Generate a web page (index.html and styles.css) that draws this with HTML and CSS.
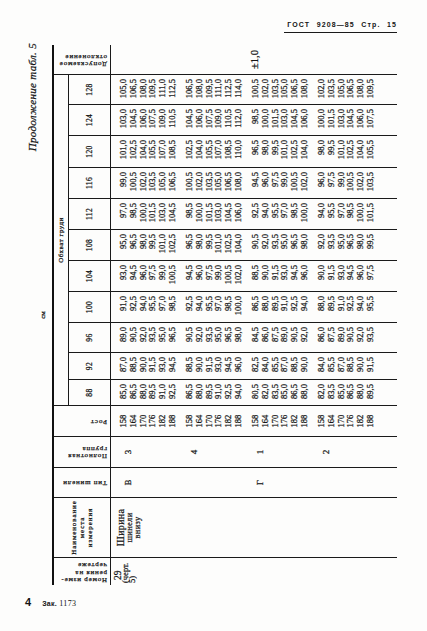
FILE: index.html
```html
<!DOCTYPE html>
<html lang="ru">
<head>
<meta charset="utf-8">
<title>ГОСТ 9208—85 Стр. 15</title>
<link rel="stylesheet" href="styles.css">
</head>
<body>
<header class="top"><span class="title">ГОСТ 9208—85 Стр. 15</span></header>
<main class="sheet">
  <div class="rot">
    <div class="caption">
      <span class="unit">см</span>
      <span class="cont">Продолжение табл. 5</span>
    </div>
    <div class="tbl">
      <div class="c1 hb vt c-num"><span>Номер изме-<br>рения на<br>чертеже</span></div>
      <div class="hb c-name"><span>Наименование<br>места<br>измерения</span></div>
      <div class="hb vt c-type"><span>Тип шинели</span></div>
      <div class="hb vt c-full"><span>Полнотная<br>группа</span></div>
      <div class="hb vt c-rost"><span>Рост</span></div>
      <div class="hb c-chest">Обхват груди</div>
      <div class="hb vt c-tol"><span>Допускаемое<br>отклонение</span></div>

      <div class="c1 d-num"><span class="ind">29</span><br>(черт.<br>5)</div>
      <div class="d-name"><span class="cap">Ширина</span><span>шинели</span><span>внизу</span></div>
      <div class="d-type d-b">В</div>
      <div class="d-type d-g">Г</div>
      <div class="d-tol">±1,0</div>

      <div class="hb lab">88</div>
      <div class="hb lab">92</div>
      <div class="hb lab">96</div>
      <div class="hb lab">100</div>
      <div class="hb lab">104</div>
      <div class="hb lab">108</div>
      <div class="hb lab">112</div>
      <div class="hb lab">116</div>
      <div class="hb lab">120</div>
      <div class="hb lab">124</div>
      <div class="hb lab">128</div>

      <div class="grp">3</div>
      <div class="n rost">158<br>164<br>170<br>176<br>182<br>188</div>
      <div class="n">85,0<br>86,5<br>88,0<br>89,5<br>91,0<br>92,5</div>
      <div class="n">87,0<br>88,5<br>90,0<br>91,5<br>93,0<br>94,5</div>
      <div class="n">89,0<br>90,5<br>92,0<br>93,5<br>95,0<br>96,5</div>
      <div class="n">91,0<br>92,5<br>94,0<br>95,5<br>97,0<br>98,5</div>
      <div class="n">93,0<br>94,5<br>96,0<br>97,5<br>99,0<br>100,5</div>
      <div class="n">95,0<br>96,5<br>98,0<br>99,5<br>101,0<br>102,5</div>
      <div class="n">97,0<br>98,5<br>100,0<br>101,5<br>103,0<br>104,5</div>
      <div class="n">99,0<br>100,5<br>102,0<br>103,5<br>105,0<br>106,5</div>
      <div class="n">101,0<br>102,5<br>104,0<br>105,5<br>107,0<br>108,5</div>
      <div class="n">103,0<br>104,5<br>106,0<br>107,5<br>109,0<br>110,5</div>
      <div class="n">105,0<br>106,5<br>108,0<br>109,5<br>111,0<br>112,5</div>

      <div class="grp">4</div>
      <div class="n rost">158<br>164<br>170<br>176<br>182<br>188</div>
      <div class="n">86,5<br>88,0<br>89,5<br>91,0<br>92,5<br>94,0</div>
      <div class="n">88,5<br>90,0<br>91,5<br>93,0<br>94,5<br>96,0</div>
      <div class="n">90,5<br>92,0<br>93,5<br>95,0<br>96,5<br>98,0</div>
      <div class="n">92,5<br>94,0<br>95,5<br>97,0<br>98,5<br>100,0</div>
      <div class="n">94,5<br>96,0<br>97,5<br>99,0<br>100,5<br>102,0</div>
      <div class="n">96,5<br>98,0<br>99,5<br>101,0<br>102,5<br>104,0</div>
      <div class="n">98,5<br>100,0<br>101,5<br>103,0<br>104,5<br>106,0</div>
      <div class="n">100,5<br>102,0<br>103,5<br>105,0<br>106,5<br>108,0</div>
      <div class="n">102,5<br>104,0<br>105,5<br>107,0<br>108,5<br>110,0</div>
      <div class="n">104,5<br>106,0<br>107,5<br>109,0<br>110,5<br>112,0</div>
      <div class="n">106,5<br>108,0<br>109,5<br>111,0<br>112,5<br>114,0</div>

      <div class="grp">1</div>
      <div class="n rost">158<br>164<br>170<br>176<br>182<br>188</div>
      <div class="n">80,5<br>82,0<br>83,5<br>85,0<br>86,5<br>88,0</div>
      <div class="n">82,5<br>84,0<br>85,5<br>87,0<br>88,5<br>90,0</div>
      <div class="n">84,5<br>86,0<br>87,5<br>89,0<br>90,5<br>92,0</div>
      <div class="n">86,5<br>88,0<br>89,5<br>91,0<br>92,5<br>94,0</div>
      <div class="n">88,5<br>90,0<br>91,5<br>93,0<br>94,5<br>96,0</div>
      <div class="n">90,5<br>92,0<br>93,5<br>95,0<br>96,5<br>98,0</div>
      <div class="n">92,5<br>94,0<br>95,5<br>97,0<br>98,5<br>100,0</div>
      <div class="n">94,5<br>96,0<br>97,5<br>99,0<br>100,5<br>102,0</div>
      <div class="n">96,5<br>98,0<br>99,5<br>101,0<br>102,5<br>104,0</div>
      <div class="n">98,5<br>100,0<br>101,5<br>103,0<br>104,5<br>106,0</div>
      <div class="n">100,5<br>102,0<br>103,5<br>105,0<br>106,5<br>108,0</div>

      <div class="grp">2</div>
      <div class="n rost">158<br>164<br>170<br>176<br>182<br>188</div>
      <div class="n">82,0<br>83,5<br>85,0<br>86,5<br>88,0<br>89,5</div>
      <div class="n">84,0<br>85,5<br>87,0<br>88,5<br>90,0<br>91,5</div>
      <div class="n">86,0<br>87,5<br>89,0<br>90,5<br>92,0<br>93,5</div>
      <div class="n">88,0<br>89,5<br>91,0<br>92,5<br>94,0<br>95,5</div>
      <div class="n">90,0<br>91,5<br>93,0<br>94,5<br>96,0<br>97,5</div>
      <div class="n">92,0<br>93,5<br>95,0<br>96,5<br>98,0<br>99,5</div>
      <div class="n">94,0<br>95,5<br>97,0<br>98,5<br>100,0<br>101,5</div>
      <div class="n">96,0<br>97,5<br>99,0<br>100,5<br>102,0<br>103,5</div>
      <div class="n">98,0<br>99,5<br>101,0<br>102,5<br>104,0<br>105,5</div>
      <div class="n">100,0<br>101,5<br>103,0<br>104,5<br>106,0<br>107,5</div>
      <div class="n">102,0<br>103,5<br>105,0<br>106,5<br>108,0<br>109,5</div>
    </div>
  </div>
</main>
<footer class="foot"><b class="pg">4</b><span class="zak"><b>Зак.</b> 1173</span></footer>
</body>
</html>
```

FILE: styles.css
```css
html, body {
  margin: 0;
  padding: 0;
  background: #fdfdfc;
  overflow: hidden;
}
body {
  width: 427px;
  height: 631px;
  font-family: "Liberation Serif", "DejaVu Serif", serif;
  color: #141414;
}

/* running head */
.top {
  height: 45px;
  box-sizing: border-box;
  padding: 21px 30px 0 0;
  display: flex;
  justify-content: flex-end;
  align-items: flex-start;
}
.title {
  font-family: "Liberation Sans", Arial, sans-serif;
  font-weight: 700;
  font-size: 7px;
  line-height: 8px;
  letter-spacing: 1.1px;
  word-spacing: 3.5px;
  padding: 0 0 3px 3px;
  border-bottom: 1.5px solid #1a1a1a;
  white-space: nowrap;
}

/* landscape table, turned a quarter counter-clockwise */
.sheet {
  height: 540px;
}
.rot {
  margin-left: 25px;
  width: 540px;
  height: 372px;
  transform-origin: 0 0;
  transform: translate(0, 540px) rotate(-90deg);
  -webkit-text-stroke: 0.25px #141414;
}
.caption {
  height: 27px;
  display: grid;
  grid-template-columns: 1fr auto 1fr;
}
.unit {
  grid-column: 2;
  align-self: end;
  font-size: 7px;
  line-height: 8px;
  padding-bottom: 5px;
}
.cont {
  grid-column: 3;
  justify-self: end;
  align-self: start;
  font-style: italic;
  font-size: 11px;
  line-height: 14px;
  letter-spacing: 0.3px;
  margin-right: -2px;
  white-space: nowrap;
}

.tbl {
  display: grid;
  grid-template-columns: 27px 60px 30px 31px 31px 26px 27px 30px 31px 31px 31px 31px 31px 32px 31px 30px 30px;
  grid-template-rows: 15px 42px 66px 66px 66px 88px;
  border-top: 2px solid #111;
}
.tbl > div {
  border-left: 1px solid #1a1a1a;
  box-sizing: border-box;
  min-width: 0;
  white-space: nowrap;
}
.tbl > .c1 {
  border-left: 0;
}
.hb {
  border-bottom: 1px solid #1a1a1a;
}

/* header cells whose text stands upright in the table (turned to read upward) */
.vt {
  display: flex;
  justify-content: center;
  padding: 2px 0 3px;
}
.vt > span {
  writing-mode: vertical-rl;
  transform: rotate(180deg);
  font-size: 7px;
  line-height: 7.5px;
  letter-spacing: 0.8px;
  text-align: start;
}
.c-num { grid-column: 1; grid-row: 1 / 3; }
.c-name {
  grid-column: 2;
  grid-row: 1 / 3;
  display: flex;
  align-items: center;
  justify-content: center;
  text-align: center;
  font-size: 7px;
  line-height: 8px;
  letter-spacing: 0.9px;
}
.c-type { grid-column: 3; grid-row: 1 / 3; }
.c-full { grid-column: 4; grid-row: 1 / 3; }
.c-rost { grid-column: 5; grid-row: 1 / 3; }
.c-chest {
  grid-column: 6 / 17;
  grid-row: 1;
  text-align: center;
  font-size: 7px;
  line-height: 14px;
  letter-spacing: 0.5px;
}
.c-tol { grid-column: 17; grid-row: 1 / 3; }

.lab {
  display: flex;
  align-items: center;
  justify-content: center;
  font-size: 7.5px;
  letter-spacing: 0.4px;
}

/* body cells */
.d-num {
  grid-column: 1;
  grid-row: 3 / 7;
  font-size: 8.5px;
  line-height: 7px;
  padding: 4px 0 0 2px;
}
.ind {
  padding-left: 3px;
  font-size: 9.5px;
}
.d-name {
  grid-column: 2;
  grid-row: 3 / 7;
  display: flex;
  flex-direction: column;
  align-items: center;
  justify-content: flex-start;
  font-size: 8.5px;
  line-height: 8px;
  padding-top: 5px;
  letter-spacing: 0.3px;
}
.cap {
  font-size: 10px;
  line-height: 9px;
}
.d-type {
  grid-column: 3;
  text-align: center;
  font-size: 8.5px;
  line-height: 10px;
  padding-top: 12px;
}
.d-b { grid-row: 3 / 5; }
.d-g { grid-row: 5 / 7; }
.d-tol {
  grid-column: 17;
  grid-row: 3 / 7;
  display: flex;
  align-items: center;
  justify-content: center;
  font-size: 10.5px;
}
.grp {
  text-align: center;
  font-size: 9px;
  line-height: 10px;
  padding-top: 12px;
}
.n {
  font-size: 8.5px;
  line-height: 9.8px;
  text-align: right;
  padding: 8px 4px 0 0;
}
.n.rost {
  text-align: center;
  padding-right: 0;
}

/* folio */
.foot {
  display: flex;
  align-items: baseline;
  gap: 11px;
  padding: 10px 0 0 25px;
}
.pg {
  font-family: "Liberation Sans", Arial, sans-serif;
  font-size: 11px;
  line-height: 14px;
}
.zak {
  font-size: 8px;
  letter-spacing: 0.3px;
}
.zak b {
  font-family: "Liberation Sans", Arial, sans-serif;
  font-size: 7px;
}
```
